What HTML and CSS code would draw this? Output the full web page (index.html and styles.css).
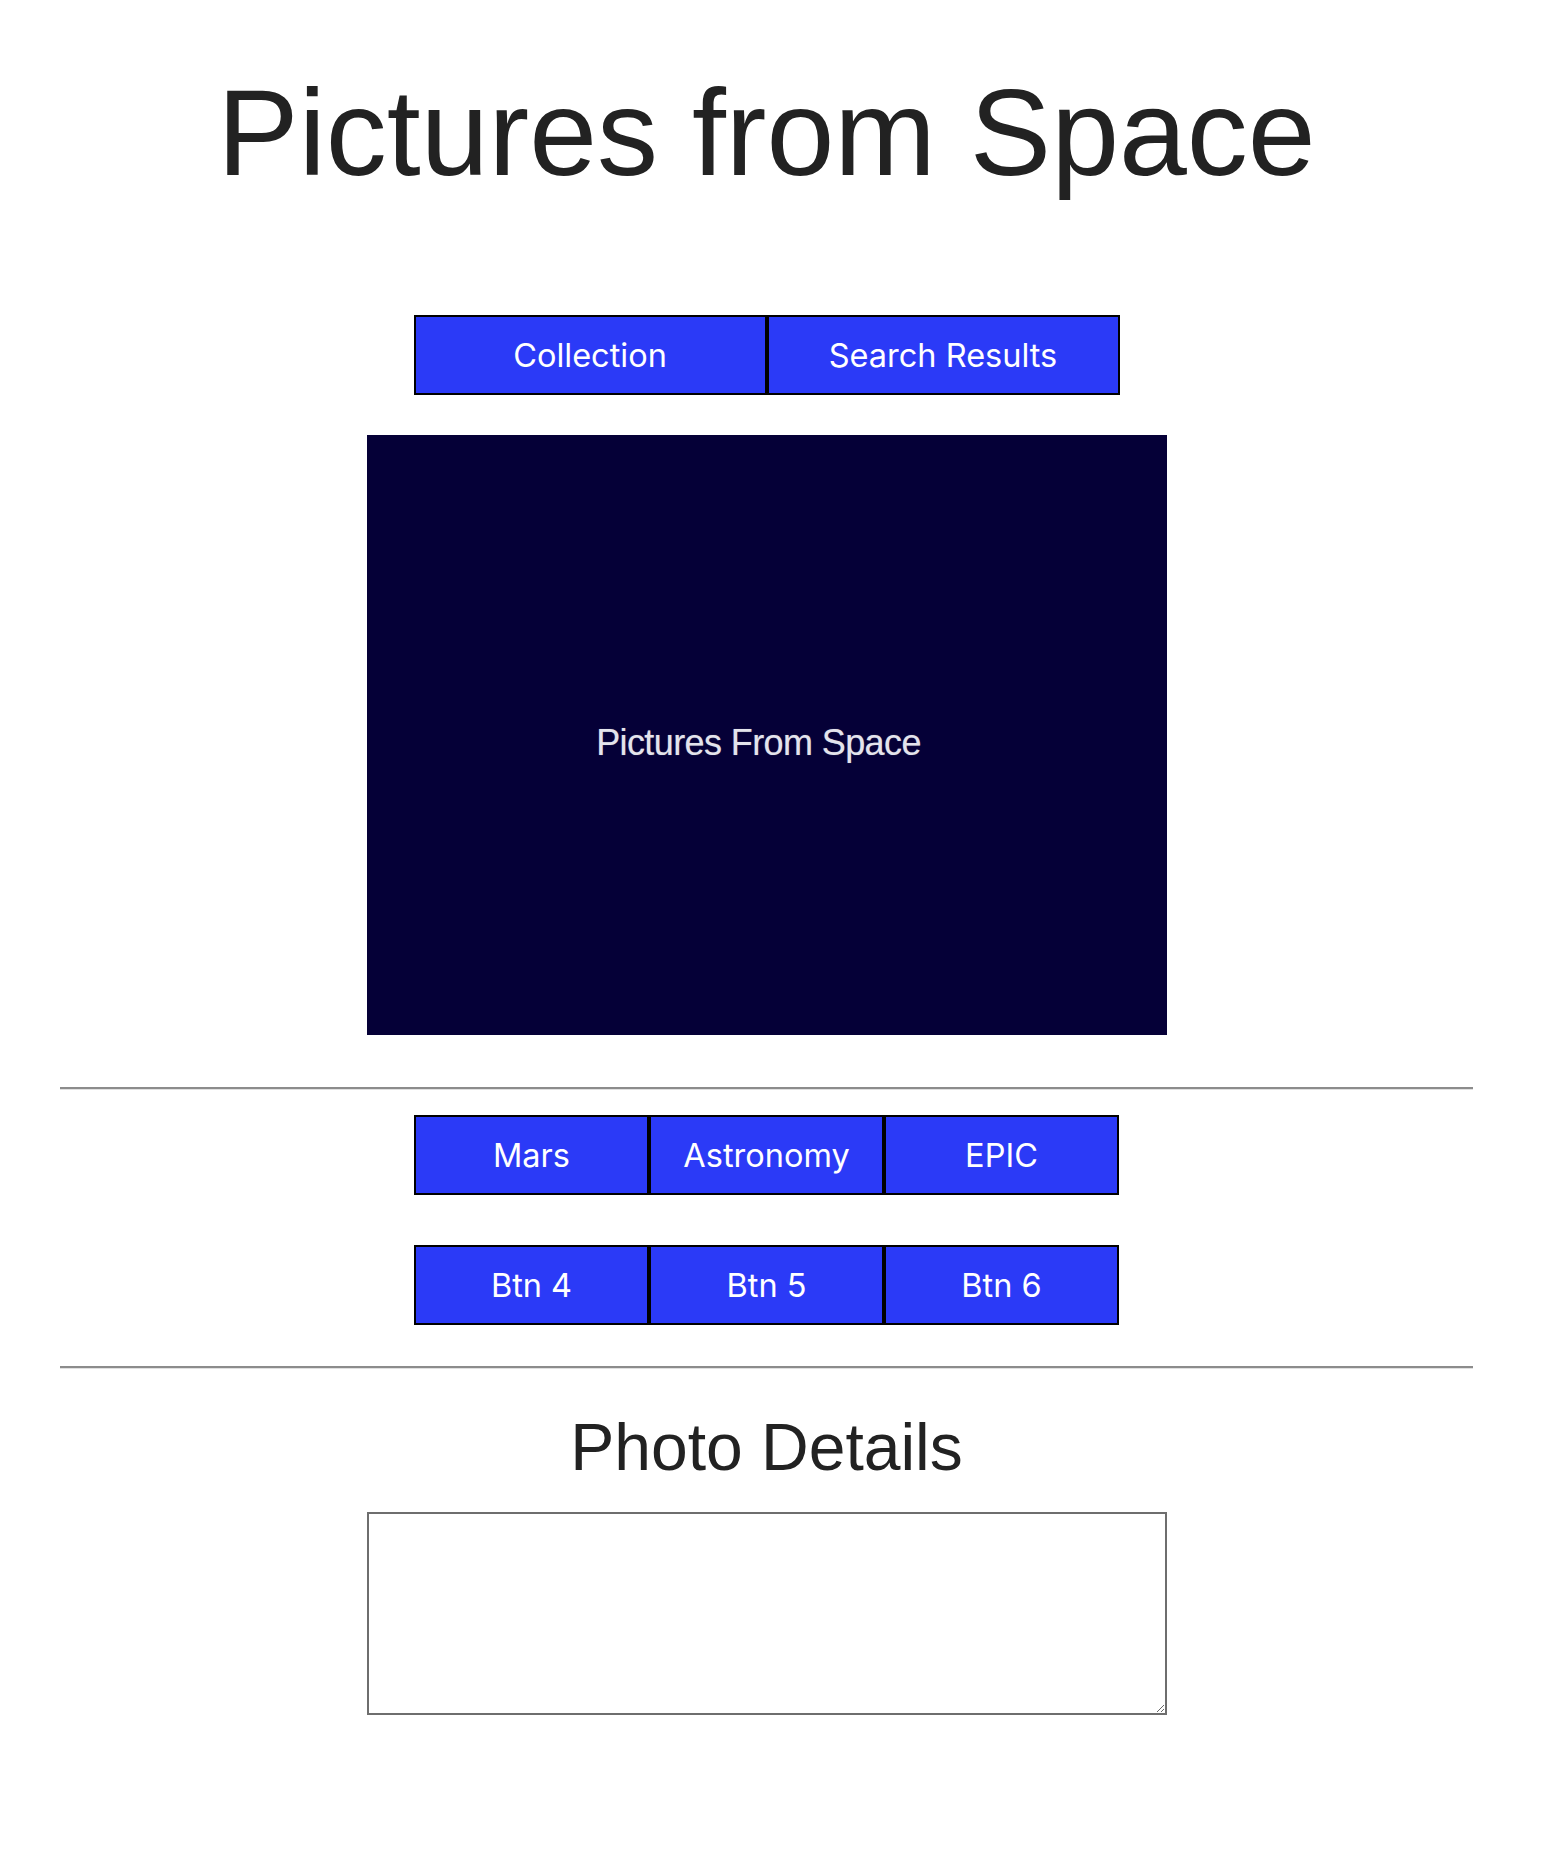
FILE: index.html
```html
<!DOCTYPE html>
<html lang="en">
<head>
    <meta charset="UTF-8">
    <meta name="viewport" content="width=device-width, initial-scale=1.0">
    <title>Pictures from Space</title>
    <link rel="stylesheet" href="styles.css">
</head>
<body>
<div class="page">
    <h1 class="title">Pictures from Space</h1>

    <!-- View switcher -->
    <div class="btn-row tabs">
        <button class="btn">Collection</button>
        <button class="btn">Search Results</button>
    </div>

    <!-- Current photo -->
    <div class="photo">
        <span class="photo-text">Pictures From Space</span>
    </div>

    <hr>

    <!-- Sources -->
    <div class="btn-row">
        <button class="btn">Mars</button>
        <button class="btn">Astronomy</button>
        <button class="btn">EPIC</button>
    </div>
    <div class="btn-row second">
        <button class="btn">Btn 4</button>
        <button class="btn">Btn 5</button>
        <button class="btn">Btn 6</button>
    </div>

    <hr>

    <h2 class="details-title">Photo Details</h2>
    <textarea class="details" id="photo-details"></textarea>
</div>
</body>
</html>
```

FILE: styles.css
```css
body {
    margin: 0;
    font-family: 'Liberation Sans', Arial, sans-serif;
    color: #222;
    background: #fff;
}

.page {
    width: 1533px;
    display: flex;
    flex-direction: column;
    align-items: center;
}

.title {
    margin: 63px 0 0;
    font-size: 122px;
    font-weight: normal;
    line-height: 1.15;
}

.btn-row {
    display: flex;
    justify-content: center;
    margin-top: 25px;
}

.btn-row.tabs {
    margin-top: 112px;
}

.btn-row.second {
    margin-top: 50px;
}

.btn {
    height: 80px;
    padding: 0;
    border: 2px solid #000;
    background: #2b3af7;
    color: #fff;
    font-family: 'Inter', 'Roboto', sans-serif;
    font-size: 32.5px;
    cursor: pointer;
}

.tabs .btn {
    width: 353px;
}

.btn-row:not(.tabs) .btn {
    width: 235px;
}

.photo {
    width: 800px;
    height: 600px;
    margin-top: 40px;
    background: #050037;
    display: flex;
    justify-content: center;
    align-items: center;
}

.photo-text {
    margin: 16px 16px 0 0;
    color: #e4e4ec;
    font-size: 36px;
    letter-spacing: -0.6px;
    text-shadow: 0 0 1px rgba(255, 255, 255, 0.4);
}

hr {
    align-self: stretch;
    margin: 52px 60px 0;
    border: none;
    border-top: 2px solid #8c8c8c;
    border-bottom: 1px solid #e0e0e0;
}

.btn-row.second + hr {
    margin-top: 41px;
}

.details-title {
    margin: 41px 0 0;
    font-size: 66px;
    font-weight: normal;
    line-height: 1.15;
}

.details {
    width: 800px;
    height: 203px;
    margin-top: 26px;
    box-sizing: border-box;
    border: 2px solid #6e6e6e;
    padding: 4px;
}
```
